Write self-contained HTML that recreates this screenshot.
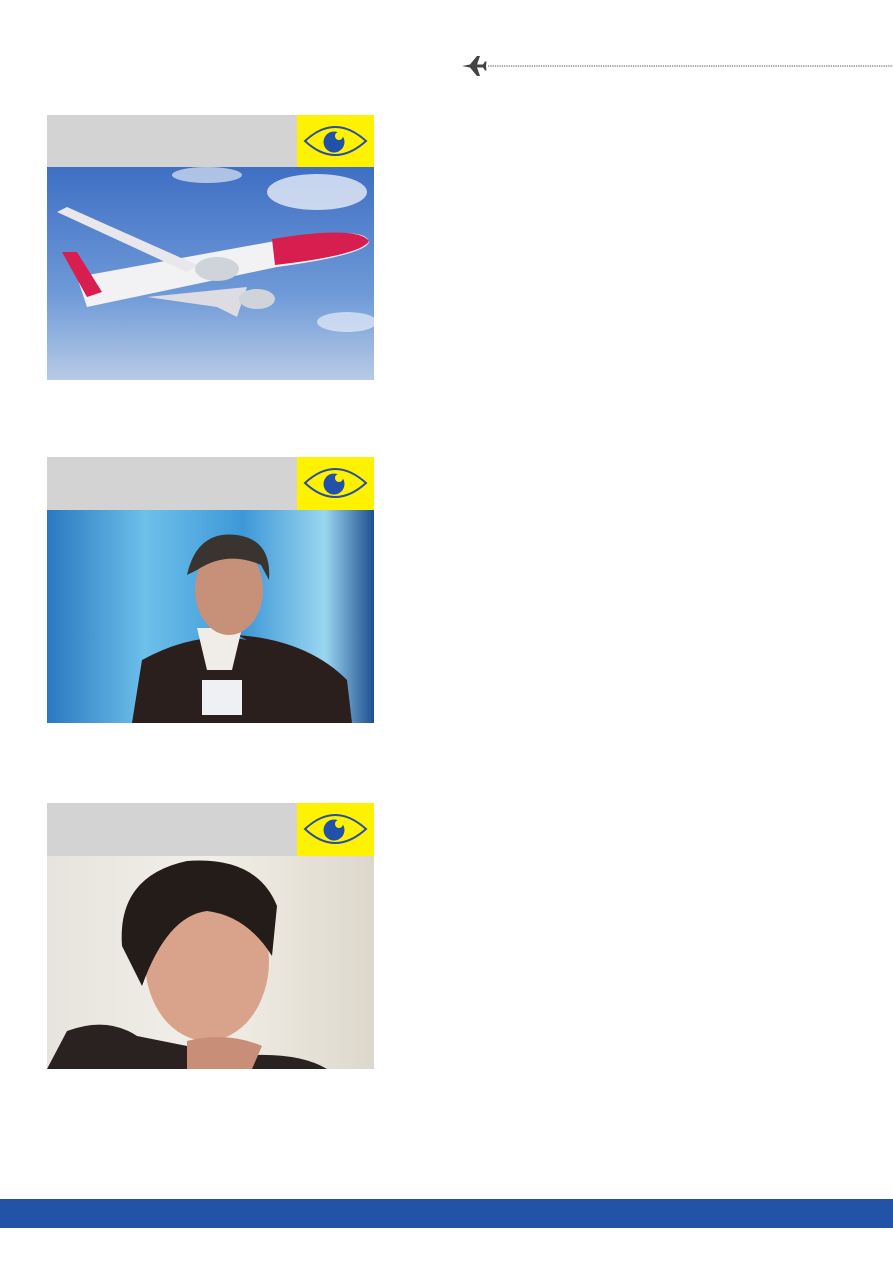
<!DOCTYPE html>
<html><head><meta charset="utf-8"><style>
body{margin:0;width:893px;height:1263px;background:#fff;position:relative;overflow:hidden;font-family:"Liberation Sans",sans-serif}
.a{position:absolute}
.hdr{background:#d3d3d3;width:250px;height:53px;left:47px}
.ylw{background:#fff200;width:77px;height:53px;left:297px}
.img{left:47px;width:327px;height:213px;overflow:hidden}
</style></head><body>
<svg class="a" style="left:460px;top:54px" width="433" height="24">
<path d="M2 12 L10 10.5 L17 2 L20 2 L17 10.5 L23 10.5 L25 7.5 L26.5 7.5 L26 12 L26.5 16.5 L25 16.5 L23 13.5 L17 13.5 L20 22 L17 22 L10 13.5 L2 12Z" fill="#444"/>
<line x1="28" y1="12" x2="433" y2="12" stroke="#777" stroke-width="1.3" stroke-dasharray="1.3 1"/>
</svg>

<div class="a hdr" style="top:115px"></div><div class="a ylw" style="top:115px"></div>
<div class="a hdr" style="top:457px"></div><div class="a ylw" style="top:457px"></div>
<div class="a hdr" style="top:803px"></div><div class="a ylw" style="top:803px"></div>

<svg class="a" style="left:297px;top:115px" width="77" height="53"><path d="M8 26 Q38 -2 69 26 Q38 54 8 26Z" fill="none" stroke="#2a4ea0" stroke-width="2"/><circle cx="37" cy="27" r="10.5" fill="#2350a8"/><circle cx="42" cy="21" r="4" fill="#fff200"/></svg>
<svg class="a" style="left:297px;top:457px" width="77" height="53"><path d="M8 26 Q38 -2 69 26 Q38 54 8 26Z" fill="none" stroke="#2a4ea0" stroke-width="2"/><circle cx="37" cy="27" r="10.5" fill="#2350a8"/><circle cx="42" cy="21" r="4" fill="#fff200"/></svg>
<svg class="a" style="left:297px;top:803px" width="77" height="53"><path d="M8 26 Q38 -2 69 26 Q38 54 8 26Z" fill="none" stroke="#2a4ea0" stroke-width="2"/><circle cx="37" cy="27" r="10.5" fill="#2350a8"/><circle cx="42" cy="21" r="4" fill="#fff200"/></svg>

<div class="a img" style="top:167px;background:linear-gradient(#3f6fc4,#6f9ad8 60%,#b8cbe6)">
<svg width="327" height="213">
<ellipse cx="270" cy="25" rx="50" ry="18" fill="#e8eef8" opacity=".8"/>
<ellipse cx="160" cy="8" rx="35" ry="8" fill="#dde6f4" opacity=".7"/>
<ellipse cx="300" cy="155" rx="30" ry="10" fill="#e4ecf8" opacity=".7"/>
<path d="M30 110 L250 70 Q320 60 322 75 Q318 88 230 100 L40 140Z" fill="#f2f2f4"/>
<path d="M225 72 Q310 58 322 74 Q315 88 228 98Z" fill="#d81e4e"/>
<path d="M15 85 L40 130 L55 125 L30 85Z" fill="#d81e4e"/>
<path d="M10 45 L140 105 L150 98 L20 40Z" fill="#e8e8ec"/>
<path d="M100 130 L200 120 L190 150 L170 140Z" fill="#dcdce2"/>
<ellipse cx="170" cy="102" rx="22" ry="12" fill="#cfd3da"/>
<ellipse cx="210" cy="132" rx="18" ry="10" fill="#cfd3da"/>
</svg></div>

<div class="a img" style="top:510px;background:linear-gradient(90deg,#2a78c0,#6cc0ea 30%,#3e98d8 60%,#9ad6f0 85%,#1f4f90)">
<svg width="327" height="213">
<path d="M85 213 L95 150 Q150 120 200 130 L190 125 Q260 130 300 170 L305 213Z" fill="#2b1f1d"/>
<path d="M150 118 L195 118 L185 160 L160 160Z" fill="#f0ece8"/>
<ellipse cx="182" cy="80" rx="34" ry="45" fill="#c79079"/>
<path d="M140 65 Q150 20 190 25 Q225 30 222 70 L214 55 Q180 40 150 60Z" fill="#3a3431"/>
<rect x="155" y="170" width="40" height="35" fill="#eef0f4"/>
</svg></div>

<div class="a img" style="top:856px;background:linear-gradient(90deg,#e6e4dc,#f2efe8 50%,#ddd8cc)">
<svg width="327" height="213">
<path d="M0 213 L20 175 Q60 160 90 180 L190 200 Q250 195 280 213Z" fill="#2a2220"/>
<ellipse cx="160" cy="105" rx="62" ry="80" fill="#d9a28a"/>
<path d="M75 90 Q70 20 140 5 Q210 0 230 50 L225 100 Q200 60 160 55 Q120 60 95 130Z" fill="#231c19"/>
<path d="M140 185 Q180 175 215 190 L205 213 L140 213Z" fill="#c98e78"/>
</svg></div>

<div class="a" style="left:0;top:1199px;width:893px;height:29px;background:#2253a7"></div>
</body></html>
